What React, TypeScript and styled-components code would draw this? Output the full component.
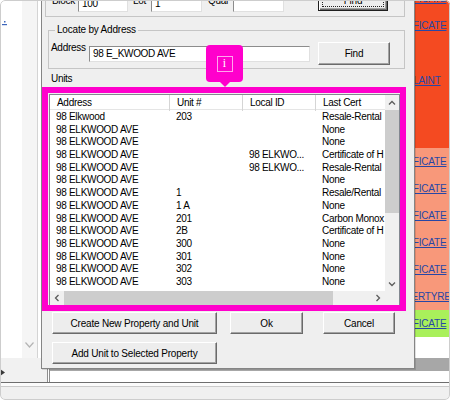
import React from "react";
import styled, { createGlobalStyle } from "styled-components";

const GlobalStyle = createGlobalStyle`
  html, body {
    margin: 0;
    padding: 0;
    background: #fff;
  }
  body {
    font-family: "Liberation Sans", Arial, sans-serif;
  }
`;

interface IUnitRow {
  address: string;
  unit: string;
  localId: string;
  cert: string;
}

interface IStatusCell {
  tone: "hot" | "warm" | "ok" | "blank";
  height: number;
  link?: string;
}

const units: IUnitRow[] = [
  { address: "98 Elkwood", unit: "203", localId: "", cert: "Resale-Rental" },
  { address: "98 ELKWOOD AVE", unit: "", localId: "", cert: "None" },
  { address: "98 ELKWOOD AVE", unit: "", localId: "", cert: "None" },
  { address: "98 ELKWOOD AVE", unit: "", localId: "98 ELKWO...", cert: "Certificate of H" },
  { address: "98 ELKWOOD AVE", unit: "", localId: "98 ELKWO...", cert: "Resale-Rental" },
  { address: "98 ELKWOOD AVE", unit: "", localId: "", cert: "None" },
  { address: "98 ELKWOOD AVE", unit: "1", localId: "", cert: "Resale/Rental" },
  { address: "98 ELKWOOD AVE", unit: "1 A", localId: "", cert: "None" },
  { address: "98 ELKWOOD AVE", unit: "201", localId: "", cert: "Carbon Monox" },
  { address: "98 ELKWOOD AVE", unit: "2B", localId: "", cert: "Certificate of H" },
  { address: "98 ELKWOOD AVE", unit: "300", localId: "", cert: "None" },
  { address: "98 ELKWOOD AVE", unit: "301", localId: "", cert: "None" },
  { address: "98 ELKWOOD AVE", unit: "302", localId: "", cert: "None" },
  { address: "98 ELKWOOD AVE", unit: "303", localId: "", cert: "None" },
];

const statusCells: IStatusCell[] = [
  { tone: "hot", height: 28, link: "CERTIFICATE" },
  { tone: "hot", height: 26, link: "CERTIFICATE" },
  { tone: "hot", height: 84, link: "COMPLAINT" },
  { tone: "hot", height: 26 },
  { tone: "warm", height: 27, link: "CERTIFICATE" },
  { tone: "warm", height: 27, link: "CERTIFICATE" },
  { tone: "warm", height: 27, link: "CERTIFICATE" },
  { tone: "warm", height: 27, link: "CERTIFICATE" },
  { tone: "warm", height: 27, link: "CERTIFICATE" },
  { tone: "warm", height: 27, link: "PROPERTYREG" },
  { tone: "ok", height: 27, link: "CERTIFICATE" },
];

const toneColors = {
  hot: "#f44a21",
  warm: "#f8987a",
  ok: "#a9f05b",
  blank: "#ffffff",
};

const columns = "120px 73px 73px 130px";

/* ---------- page underneath the dialog ---------- */

const Frame = styled.div`
  position: relative;
  width: 450px;
  height: 400px;
  overflow: hidden;
  border-radius: 5px;
  background: #fff;
  color: #000;
  font-family: "Liberation Sans", Arial, sans-serif;
  font-size: 10px;
  letter-spacing: -0.3px;

  &::after {
    content: "";
    position: absolute;
    inset: 0;
    border: 1px solid #cdcdcd;
    border-radius: 5px;
    pointer-events: none;
  }
`;

const Page = styled.div`
  display: grid;
  grid-template-columns: 38px 1fr 70px;
  grid-template-rows: 358px 42px;
  height: 100%;
`;

const LeftRail = styled.div`
  display: flex;
  flex-direction: column;
  background: linear-gradient(to right, #fff 0 22px, #f5f5f5 22px);
  border-right: 1px solid #d4d4d4;
`;

const TreeMark = styled.svg`
  margin: 21px 0 0 2px;
`;

const RailChevron = styled.svg`
  margin: auto 0 10px 25px;
`;

const Backdrop = styled.div`
  background: #fff;
`;

const StatusColumn = styled.div`
  display: flex;
  flex-direction: column;
  margin-top: -16px;
`;

const StatusCell = styled.div<{ $tone: IStatusCell["tone"]; $h?: number }>`
  flex: ${(p) => (p.$h ? "none" : "1")};
  height: ${(p) => (p.$h ? `${p.$h}px` : "auto")};
  display: flex;
  align-items: center;
  padding-left: 4px;
  background: ${(p) => toneColors[p.$tone]};
`;

const StatusLink = styled.a`
  color: #2747a6;
  text-decoration: underline;
  white-space: nowrap;
  letter-spacing: -0.2px;
`;

const Footer = styled.div`
  grid-column: 1 / -1;
  display: flex;
  flex-direction: column;
`;

const FooterBand = styled.div`
  display: flex;
  height: 24px;
`;

const LeftStub = styled.div`
  width: 47px;
  background: #f1f1f1;
`;

const StubArrow = styled.svg`
  display: block;
  margin-top: 11px;
`;

const RecordPanel = styled.div`
  flex: 1;
  display: flex;
  flex-direction: column;
  border-left: 3px double #8e8e8e;
  background: #fff;
`;

const RecordStrip = styled.div`
  height: 13px;
  padding: 0 0 0 17px;
  background: #a7a7a7;
  line-height: 12px;
  white-space: nowrap;
  overflow: hidden;
`;

const RecordLink = styled.a`
  color: #2747a6;
  text-decoration: underline;
`;

const FooterRule = styled.div<{ $light?: boolean }>`
  height: 1px;
  background: ${(p) => (p.$light ? "#cacaca" : "#6e6e6e")};
`;

const FooterGap = styled.div`
  height: 3px;
  background: #fbfbfb;
`;

const FooterTail = styled.div`
  flex: 1;
  background: #f0f0f0;
`;

/* ---------- the units dialog ---------- */

const Dialog = styled.div`
  position: absolute;
  left: 41px;
  top: -16px;
  width: 374px;
  height: 385px;
  box-sizing: border-box;
  display: flex;
  flex-direction: column;
  border: 1px solid #858585;
  background: #efefef;
  box-shadow: 1px 1px 0 rgba(0, 0, 0, 0.12);
`;

const LotGroup = styled.div`
  display: flex;
  align-items: flex-end;
  width: 360px;
  height: 29px;
  margin: 3px 0 0 3px;
  padding: 0 0 4px 6px;
  box-sizing: border-box;
  border: 1px solid #c5c5c5;
`;

const Label = styled.span<{ $w?: number; $indent?: number }>`
  align-self: center;
  width: ${(p) => (p.$w ? `${p.$w}px` : "auto")};
  padding-left: ${(p) => p.$indent ?? 0}px;
  box-sizing: border-box;
  line-height: 12px;
  white-space: nowrap;
`;

const TextBox = styled.input<{ $w: number; $h?: number }>`
  width: ${(p) => p.$w}px;
  height: ${(p) => p.$h ?? 17}px;
  box-sizing: border-box;
  margin: 0;
  padding: 0 3px;
  border: 1px solid;
  border-color: #8c8c8c #e0e0e0 #e0e0e0 #8c8c8c;
  background: #fff;
  color: #000;
  font: inherit;
  letter-spacing: inherit;
  outline: none;
`;

const Button = styled.button<{ $w: number; $h?: number; $primary?: boolean }>`
  width: ${(p) => p.$w}px;
  height: ${(p) => p.$h ?? 22}px;
  box-sizing: border-box;
  margin: 0;
  padding: 0;
  border: 1px solid;
  border-color: ${(p) => (p.$primary ? "#1e1e1e" : "#fff #6a6a6a #6a6a6a #fff")};
  background: #ededed;
  box-shadow: ${(p) =>
    p.$primary
      ? "inset 1px 1px 0 #fff, inset -1px -1px 0 #6a6a6a, inset -2px -2px 0 #a3a3a3"
      : "inset -1px -1px 0 #a3a3a3"};
  outline: ${(p) => (p.$primary ? "1px dotted #222" : "none")};
  outline-offset: -5px;
  color: #000;
  font: inherit;
  letter-spacing: -0.2px;
  white-space: nowrap;
`;

const Spacer = styled.span<{ $w: number }>`
  width: ${(p) => p.$w}px;
  flex: none;
`;

const LocateGroup = styled.fieldset`
  width: 357px;
  margin: 7px 0 0 6px;
  padding: 0 2px 3px 2px;
  box-sizing: border-box;
  border: 1px solid #c5c5c5;
  min-width: 0;
`;

const GroupTitle = styled.legend`
  margin-left: 4px;
  padding: 0 2px;
  line-height: 12px;
  letter-spacing: -0.2px;
`;

const LocateRow = styled.div`
  display: flex;
  align-items: center;
  margin-top: 6px;

  & > ${Label} {
    align-self: flex-start;
  }
`;

const UnitsCaption = styled.div`
  margin: 4px 0 0 9px;
  line-height: 12px;
`;

const ListView = styled.div`
  display: grid;
  grid-template-columns: 1fr 14px;
  grid-template-rows: 1fr 14px;
  width: 351px;
  height: 212px;
  margin: 9px 0 0 7px;
  box-sizing: border-box;
  border: 1px solid #828790;
  background: #fff;
`;

const ListPane = styled.div`
  overflow: hidden;
`;

const HeaderRow = styled.div`
  display: grid;
  grid-template-columns: ${columns};
  height: 15px;
  box-sizing: border-box;
  border-bottom: 1px solid #e5e5e5;
`;

const HeaderCell = styled.div`
  padding-left: 7px;
  border-right: 1px solid #d5d5d5;
  line-height: 16px;
  white-space: nowrap;
`;

const UnitRow = styled.div`
  display: grid;
  grid-template-columns: ${columns};
  height: 12.7px;
  line-height: 13.4px;
`;

const UnitCell = styled.div`
  padding-left: 6px;
  white-space: nowrap;
  overflow: hidden;
`;

const ScrollBar = styled.div<{ $vertical?: boolean }>`
  display: flex;
  flex-direction: ${(p) => (p.$vertical ? "column" : "row")};
  background: #f0f0f0;
`;

const ScrollArrow = styled.div<{ $vertical?: boolean }>`
  flex: none;
  width: 14px;
  height: ${(p) => (p.$vertical ? "15px" : "14px")};
  display: flex;
  align-items: center;
  justify-content: center;
`;

const ScrollThumb = styled.div<{ $vertical?: boolean; $size: number }>`
  flex: none;
  ${(p) => (p.$vertical ? `height: ${p.$size}px;` : `width: ${p.$size}px;`)}
  background: #cdcdcd;
`;

const ScrollTrack = styled.div`
  flex: 1;
`;

const ScrollCorner = styled.div`
  background: #f0f0f0;
`;

const ButtonRow = styled.div<{ $top: number }>`
  display: flex;
  margin: ${(p) => p.$top}px 0 0 10px;
`;

/* ---------- callout drawn over the list ---------- */

const Highlight = styled.div`
  position: absolute;
  left: 42px;
  top: 87px;
  width: 364px;
  height: 224px;
  box-sizing: border-box;
  border: 6px solid #ff00cc;
  pointer-events: none;
`;

const Marker = styled.div`
  position: absolute;
  left: 206px;
  top: 45px;
  width: 37px;
  height: 37px;
  display: flex;
  align-items: center;
  justify-content: center;
  border-radius: 4px;
  background: #ff00cc;

  &::after {
    content: "";
    position: absolute;
    left: 50%;
    bottom: -5px;
    margin-left: -5px;
    border-style: solid;
    border-width: 5px 5px 0 5px;
    border-color: #ff00cc transparent transparent transparent;
  }
`;

const MarkerGlyph = styled.span`
  width: 16px;
  height: 16px;
  box-sizing: border-box;
  display: flex;
  align-items: center;
  justify-content: center;
  border: 1px solid rgba(255, 255, 255, 0.65);
  color: #fff;
  font: 12px "Liberation Serif", serif;
  letter-spacing: 0;
`;

const Chevron: React.FC<{ dir: "up" | "down" | "left" | "right" }> = ({ dir }) => {
  const rotate = { up: 0, right: 90, down: 180, left: 270 }[dir];
  return (
    <svg width="8" height="8" viewBox="0 0 8 8" style={{ transform: `rotate(${rotate}deg)` }}>
      <polyline points="1,5.5 4,2.5 7,5.5" fill="none" stroke="#5c5c5c" strokeWidth="1.3" />
    </svg>
  );
};

export default function App(): JSX.Element {
  return (
    <Frame>
      <GlobalStyle />
      <Page>
        <LeftRail>
          <TreeMark width="6" height="5" viewBox="0 0 6 5">
            <rect x="2" y="0" width="1.5" height="1.5" fill="#3d66bb" />
            <rect x="0" y="3" width="5" height="1.2" fill="#3d66bb" />
          </TreeMark>
          <RailChevron width="9" height="6" viewBox="0 0 9 6">
            <polyline points="0.5,0.5 4.5,5 8.5,0.5" fill="none" stroke="#b4b4b4" strokeWidth="1.2" />
          </RailChevron>
        </LeftRail>
        <Backdrop />
        <StatusColumn>
          {statusCells.map((cell, i) => (
            <StatusCell key={i} $tone={cell.tone} $h={cell.height}>
              {cell.link && <StatusLink href="#">{cell.link}</StatusLink>}
            </StatusCell>
          ))}
          <StatusCell $tone="blank" />
        </StatusColumn>
        <Footer>
          <FooterBand>
            <LeftStub>
              <StubArrow width="5" height="7" viewBox="0 0 5 7">
                <polygon points="0,0 5,3.5 0,7" fill="#3a3a3a" />
              </StubArrow>
            </LeftStub>
            <RecordPanel>
              <RecordStrip>
                <RecordLink href="#">98 ELKWOOD AVE - Resale-Rental Certificate of Occupancy, Unit 203</RecordLink>
              </RecordStrip>
            </RecordPanel>
          </FooterBand>
          <FooterRule />
          <FooterGap />
          <FooterRule $light />
          <FooterTail />
        </Footer>
      </Page>

      <Dialog>
        <LotGroup>
          <Label $w={26}>Block</Label>
          <TextBox $w={50} defaultValue="100" readOnly />
          <Label $w={23} $indent={5}>Lot</Label>
          <TextBox $w={51} defaultValue="1" readOnly />
          <Label $w={31} $indent={6}>Qual</Label>
          <TextBox $w={51} defaultValue="" readOnly />
          <Spacer $w={34} />
          <Button $w={70} $primary style={{ marginBottom: 1 }}>Find</Button>
        </LotGroup>

        <LocateGroup>
          <GroupTitle>Locate by Address</GroupTitle>
          <LocateRow>
            <Label $w={38}>Address</Label>
            <TextBox $w={221} $h={16} defaultValue="98 E_KWOOD AVE" readOnly />
            <Spacer $w={8} />
            <Button $w={72} $h={23}>Find</Button>
          </LocateRow>
        </LocateGroup>

        <UnitsCaption>Units</UnitsCaption>
        <ListView>
          <ListPane>
            <HeaderRow>
              <HeaderCell>Address</HeaderCell>
              <HeaderCell>Unit #</HeaderCell>
              <HeaderCell>Local ID</HeaderCell>
              <HeaderCell>Last Cert</HeaderCell>
            </HeaderRow>
            {units.map((row, i) => (
              <UnitRow key={i}>
                <UnitCell>{row.address}</UnitCell>
                <UnitCell>{row.unit}</UnitCell>
                <UnitCell>{row.localId}</UnitCell>
                <UnitCell>{row.cert}</UnitCell>
              </UnitRow>
            ))}
          </ListPane>
          <ScrollBar $vertical>
            <ScrollArrow $vertical>
              <Chevron dir="up" />
            </ScrollArrow>
            <ScrollThumb $vertical $size={103} />
            <ScrollTrack />
            <ScrollArrow $vertical>
              <Chevron dir="down" />
            </ScrollArrow>
          </ScrollBar>
          <ScrollBar>
            <ScrollArrow>
              <Chevron dir="left" />
            </ScrollArrow>
            <ScrollThumb $size={269} />
            <ScrollTrack />
            <ScrollArrow>
              <Chevron dir="right" />
            </ScrollArrow>
          </ScrollBar>
          <ScrollCorner />
        </ListView>

        <ButtonRow $top={6}>
          <Button $w={165}>Create New Property and Unit</Button>
          <Spacer $w={13} />
          <Button $w={73}>Ok</Button>
          <Spacer $w={20} />
          <Button $w={72}>Cancel</Button>
        </ButtonRow>
        <ButtonRow $top={8}>
          <Button $w={165}>Add Unit to Selected Property</Button>
        </ButtonRow>
      </Dialog>

      <Highlight />
      <Marker>
        <MarkerGlyph>i</MarkerGlyph>
      </Marker>
    </Frame>
  );
}
